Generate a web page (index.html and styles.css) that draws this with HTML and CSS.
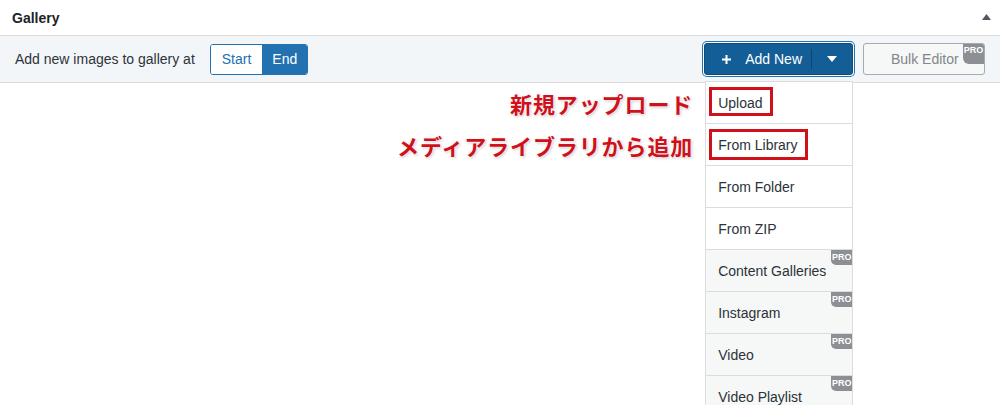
FILE: index.html
```html
<!DOCTYPE html>
<html lang="ja">
<head>
    <meta charset="UTF-8">
    <title>Gallery</title>
    <link rel="stylesheet" href="styles.css">
</head>
<body>
    <div class="postbox">
        <div class="postbox-header">
            <h2>Gallery</h2>
            <svg class="toggle-arrow" width="9" height="6" viewBox="0 0 9 6"><polygon points="4.5,0 9,6 0,6" fill="#50575e"/></svg>
        </div>

        <div class="toolbar">
            <span class="toolbar-label">Add new images to gallery at</span>
            <div class="segmented">
                <button type="button" class="seg">Start</button>
                <button type="button" class="seg active">End</button>
            </div>

            <div class="toolbar-actions">
                <div class="add-wrap">
                    <button type="button" class="btn-add">
                        <svg class="plus" width="9" height="9" viewBox="0 0 9 9"><path d="M4.5 0v9M0 4.5h9" stroke="#fff" stroke-width="2"/></svg>
                        <span class="btn-text">Add New</span>
                        <span class="btn-sep"></span>
                        <svg class="caret" width="10" height="6" viewBox="0 0 10 6"><polygon points="0,0 10,0 5,6" fill="#fff"/></svg>
                    </button>

                    <ul class="add-menu">
                        <li>
                            <span class="hl hl-a">Upload</span>
                            <span class="note">新規アップロード</span>
                        </li>
                        <li>
                            <span class="hl hl-b">From Library</span>
                            <span class="note">メディアライブラリから追加</span>
                        </li>
                        <li>From Folder</li>
                        <li>From ZIP</li>
                        <li class="pro">Content Galleries <span class="pro-badge">PRO</span></li>
                        <li class="pro">Instagram <span class="pro-badge">PRO</span></li>
                        <li class="pro">Video <span class="pro-badge">PRO</span></li>
                        <li class="pro">Video Playlist <span class="pro-badge">PRO</span></li>
                    </ul>
                </div>

                <button type="button" class="btn-bulk">
                    Bulk Editor
                    <span class="pro-badge big">PRO</span>
                </button>
            </div>
        </div>
    </div>
</body>
</html>
```

FILE: styles.css
```css
* {
    margin: 0;
    padding: 0;
    box-sizing: border-box;
}

html {
    overflow: hidden;
}

body {
    font-family: "Liberation Sans", Arial, "Noto Sans CJK JP", sans-serif;
    font-size: 14px;
    color: #1d2327;
    background-color: #fff;
    min-height: 100vh;
}

.postbox-header {
    height: 36px;
    display: flex;
    align-items: center;
    justify-content: space-between;
    padding: 0 9px 0 12px;
    border-bottom: 1px solid #dcdcde;
}

.postbox-header h2 {
    font-size: 14px;
    font-weight: bold;
    color: #1d2327;
}

.toggle-arrow {
    margin-bottom: 2px;
}

.toolbar {
    position: relative;
    z-index: 2;
    height: 47px;
    display: flex;
    align-items: center;
    padding: 0 15px;
    background-color: #f3f6f8;
    border-bottom: 1px solid #dcdcde;
}

.toolbar-label {
    color: #2c3338;
    margin-right: 15px;
}

.segmented {
    display: flex;
    border: 1px solid #2271b1;
    border-radius: 3px;
    overflow: hidden;
    height: 31px;
}

.seg {
    font-family: inherit;
    font-size: 14px;
    border: none;
    background-color: #fff;
    color: #2271b1;
    padding: 0 11px;
}

.seg.active {
    background-color: #2271b1;
    color: #fff;
    padding: 0 10px;
}

.toolbar-actions {
    margin-left: auto;
    display: flex;
    align-items: center;
    gap: 10px;
}

.add-wrap {
    position: relative;
}

.btn-add {
    display: flex;
    align-items: center;
    height: 32px;
    padding: 0 15px 0 17px;
    font-family: inherit;
    font-size: 14px;
    color: #fff;
    white-space: nowrap;
    background-color: #135e96;
    border: 1px solid #0a4b78;
    border-radius: 3px;
    box-shadow: 0 0 0 1px #fff, 0 0 0 2px #2271b1;
}

.btn-add .plus {
    margin-right: 14px;
    flex-shrink: 0;
}

.btn-sep {
    width: 1px;
    height: 20px;
    background-color: rgba(0, 0, 0, 0.25);
    margin: 0 15px 0 9px;
}

.add-menu {
    list-style: none;
    position: absolute;
    top: 38px;
    left: 1px;
    width: 148px;
    background-color: #fff;
    border: 1px solid #dcdcde;
    border-bottom: none;
}

.add-menu li {
    position: relative;
    height: 42px;
    display: flex;
    align-items: center;
    padding-left: 12px;
    border-bottom: 1px solid #dcdcde;
    color: #2c3338;
    white-space: nowrap;
}

.add-menu li.pro {
    background-color: #f6f7f7;
}

.hl {
    position: relative;
}

.hl::after {
    content: "";
    position: absolute;
    left: -9px;
    right: -10px;
    top: -8px;
    bottom: -5px;
    border: 3px solid #d0101b;
}

.hl-b::after {
    bottom: -7px;
}

.note {
    position: absolute;
    right: calc(100% + 13px);
    top: 50%;
    transform: translateY(-50%);
    font-family: "Noto Sans CJK JP", sans-serif;
    font-size: 22px;
    font-weight: bold;
    letter-spacing: 0.9px;
    color: #d0101b;
    text-shadow: 0 0 2px #fff, 0 0 3px #fff, 1px 1px 3px rgba(0, 0, 0, 0.3);
}

.pro-badge {
    position: absolute;
    top: 0;
    right: 0;
    width: 21px;
    height: 15px;
    font-size: 9px;
    font-weight: bold;
    line-height: 15px;
    text-align: center;
    color: #fff;
    background-color: #8c8f94;
    border-bottom-left-radius: 5px;
}

.btn-bulk {
    position: relative;
    height: 32px;
    width: 122px;
    padding-left: 27px;
    text-align: left;
    font-family: inherit;
    font-size: 14px;
    color: #82868b;
    background-color: #f6f7f7;
    border: 1px solid #a7aaad;
    border-radius: 3px;
}

.pro-badge.big {
    height: 20px;
    line-height: 13px;
    border-top-right-radius: 2px;
    border-bottom-left-radius: 6px;
}
```
